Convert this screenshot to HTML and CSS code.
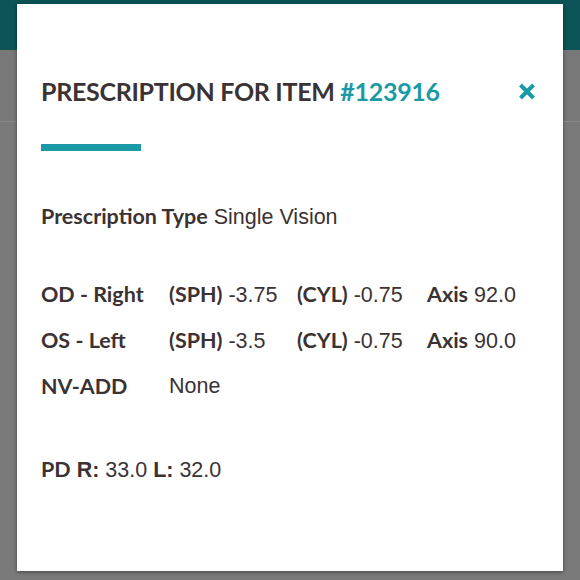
FILE: index.html
```html
<!DOCTYPE html>
<html lang="en">

<head>
    <meta charset="UTF-8">
    <meta name="viewport" content="width=device-width, initial-scale=1.0">
    <title>prescription</title>
    <link rel="stylesheet" href="styles.css">
</head>

<body>
    <div class="page">
        <header class="topbar"></header>
        <div class="subbar"></div>
        <div class="content"></div>
    </div>

    <div class="overlay">
        <div class="modal">
            <div class="modal-head">
                <h2>PRESCRIPTION FOR ITEM <span class="num">#123916</span></h2>
                <a class="close" href="javascript:;">
                    <svg width="18" height="17" viewBox="0 0 18 17">
                        <path d="M2.5 2 L15.5 15 M15.5 2 L2.5 15" stroke="#1a9aa5" stroke-width="4" />
                    </svg>
                </a>
            </div>
            <div class="rule"></div>

            <p class="type"><b>Prescription Type</b> Single Vision</p>

            <div class="grid">
                <b class="eye">OD - Right</b>
                <span><b>(SPH)</b> -3.75</span>
                <span><b>(CYL)</b> -0.75</span>
                <span><b>Axis</b> 92.0</span>

                <b class="eye">OS - Left</b>
                <span><b>(SPH)</b> -3.5</span>
                <span><b>(CYL)</b> -0.75</span>
                <span><b>Axis</b> 90.0</span>

                <b class="eye">NV-ADD</b>
                <span>None</span>
                <span></span>
                <span></span>
            </div>

            <p class="pd"><b>PD</b> <b class="sans">R:</b> 33.0 <b class="sans">L:</b> 32.0</p>
        </div>
    </div>
</body>

</html>
```

FILE: styles.css
```css
* {
    padding: 0;
    margin: 0;
    box-sizing: border-box;
}

body {
    width: 580px;
    height: 580px;
    overflow: hidden;
    position: relative;
    background: #7a7a7a;
}

.topbar {
    height: 50px;
    background: #0c5457;
}

.subbar {
    height: 72px;
    border-bottom: 1px solid #8a8a8a;
    background: #787878;
}

.overlay {
    position: absolute;
    top: 4px;
    left: 17px;
}

.modal {
    width: 546px;
    height: 567px;
    background: #fff;
    box-shadow: 0 1px 4px rgba(0, 0, 0, 0.45);
    padding: 72px 24px 0 24px;
    color: #3b3234;
    font-family: "Liberation Sans", Arial, sans-serif;
    font-size: 21.5px;
}

.modal b {
    font-family: Lato, sans-serif;
    font-weight: 700;
}

.modal-head {
    display: flex;
    justify-content: space-between;
    align-items: center;
}

h2 {
    font-family: Lato, sans-serif;
    font-weight: 700;
    font-size: 25px;
    line-height: 30px;
    letter-spacing: -0.3px;
}

.num {
    color: #1a9aa5;
}

.close {
    display: flex;
    margin-right: 3px;
}

.rule {
    width: 100px;
    height: 7px;
    background: #1a9aa5;
    margin-top: 38px;
}

.type {
    margin-top: 52px;
    line-height: 26px;
}

.grid {
    margin-top: 51px;
    display: grid;
    grid-template-columns: 128px 128px 130px auto;
    grid-auto-rows: 26px;
    row-gap: 20px;
    line-height: 26px;
}

.pd {
    margin-top: 57px;
    line-height: 26px;
}

.modal b.sans {
    font-family: "Liberation Sans", Arial, sans-serif;
}
```
